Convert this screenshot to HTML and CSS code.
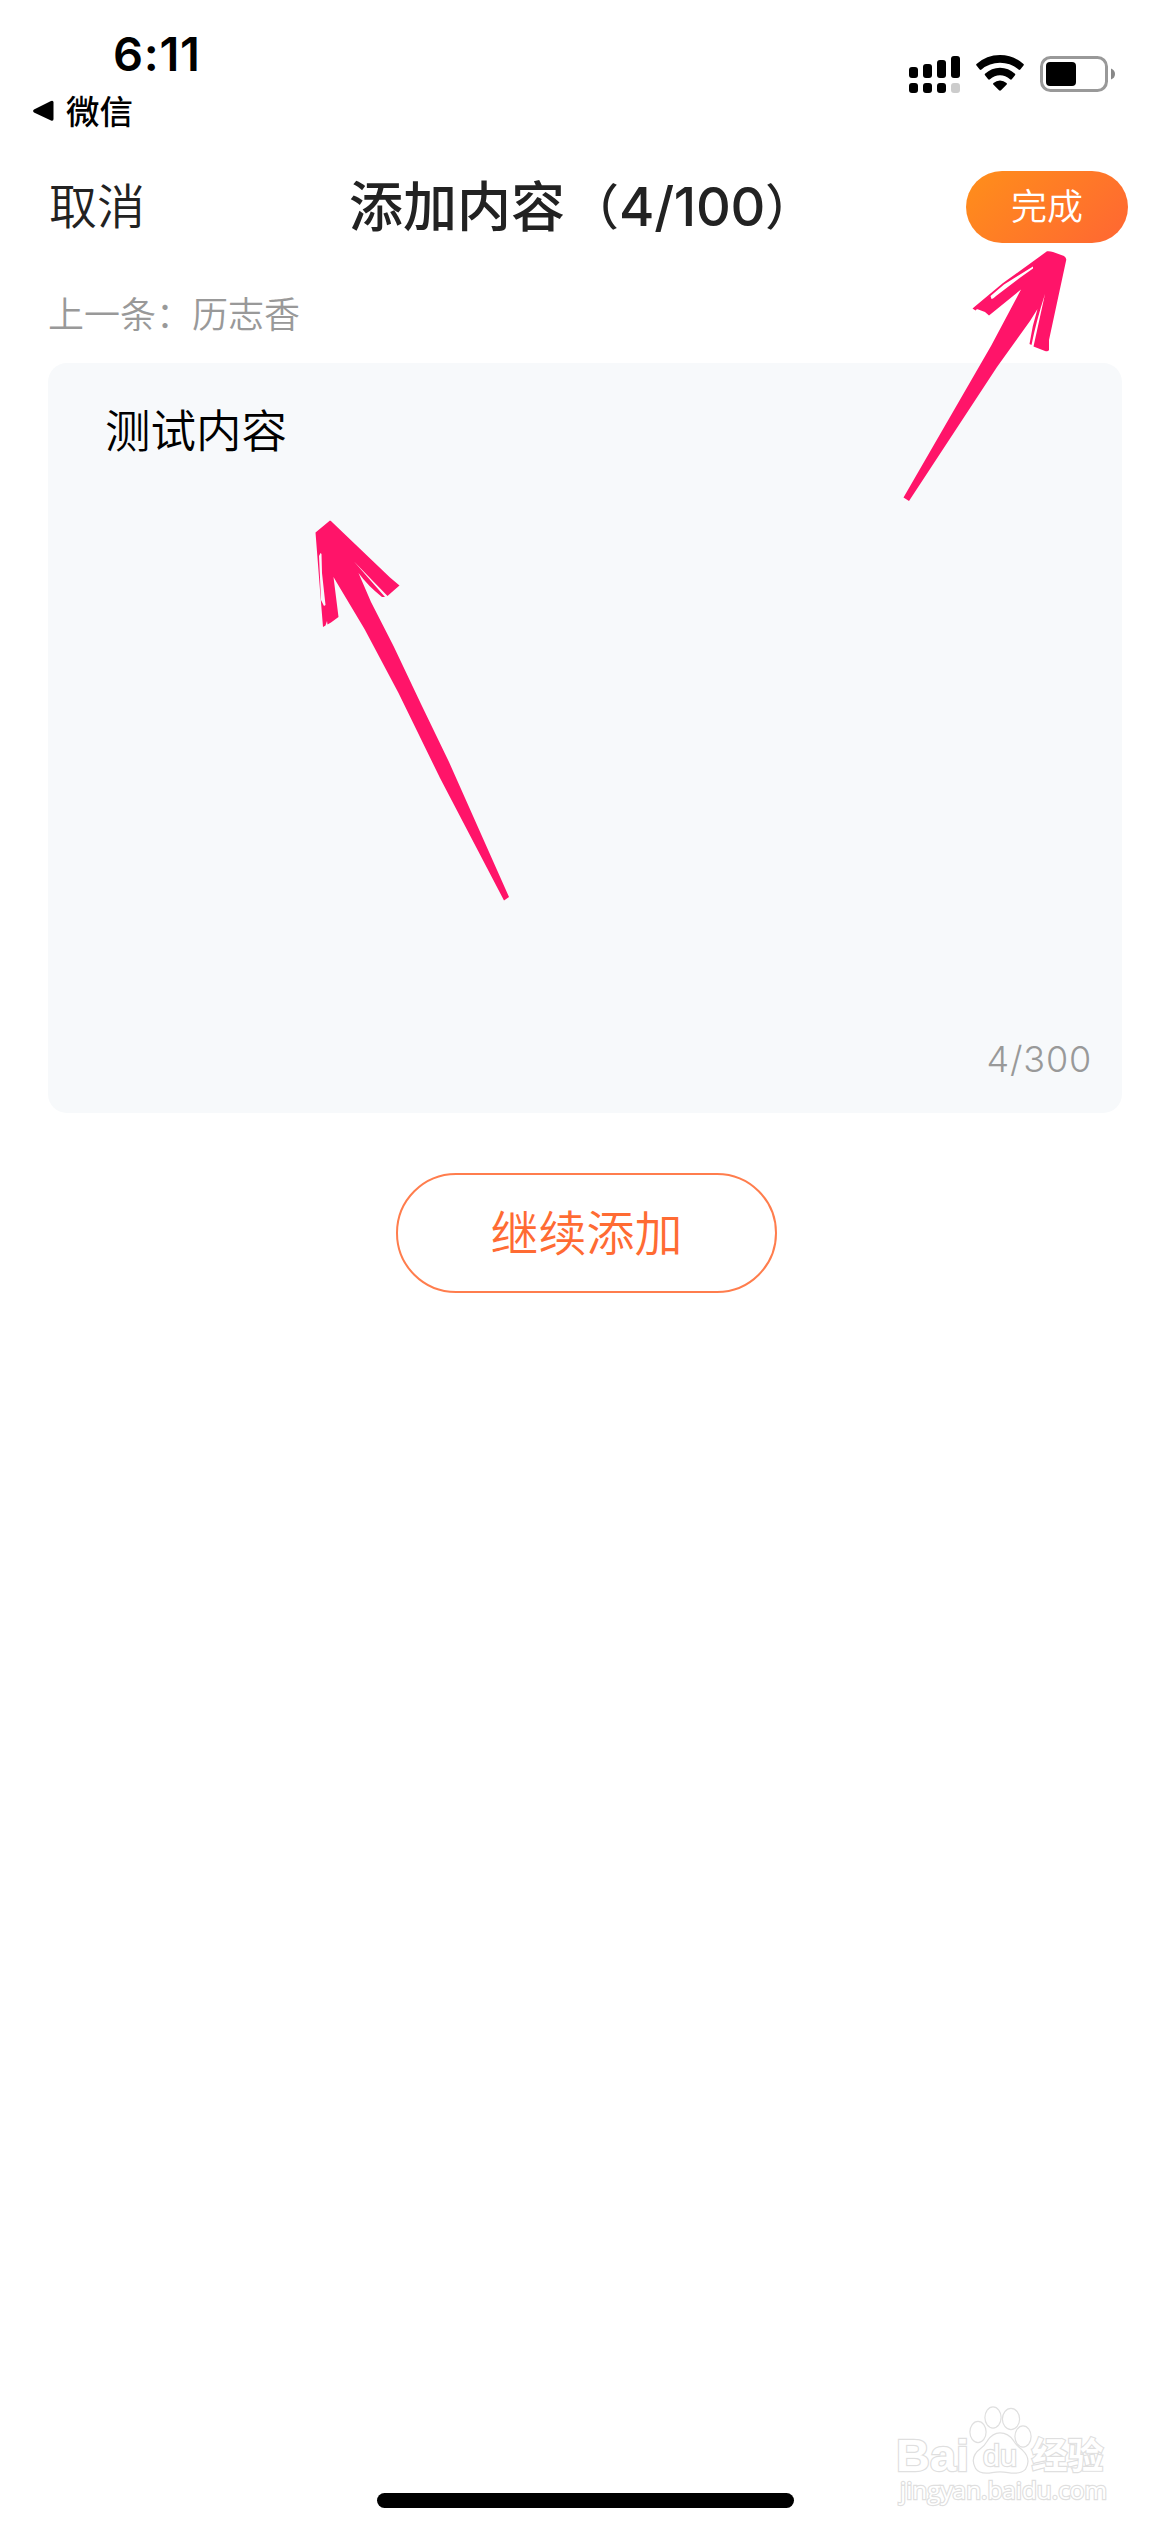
FILE: index.html
```html
<!DOCTYPE html>
<html lang="zh-CN">
<head>
<meta charset="utf-8">
<title>添加内容</title>
<link rel="stylesheet" href="styles.css">
</head>
<body>
<div class="screen">
  <header class="status">
    <div class="status-left">
      <div class="time">6:11</div>
      <div class="back-app">
        <svg width="21" height="22" viewBox="0 0 21 22"><path d="M1 9.4 18 .9Q20.5 0 20.5 2.5V19Q20.500 21.500 18 20.500L1 12.600Q-.8 11 1 9.400Z"/></svg>
        <span>微信</span>
      </div>
    </div>
    <div class="status-icons">
      <svg class="signal" width="51" height="37" viewBox="0 0 51 37">
        <rect x="0" y="11" width="9" height="11" rx="3"/><rect x="14" y="8" width="9" height="14" rx="3"/><rect x="28" y="4" width="9" height="18" rx="3"/><rect x="42" y="0" width="9" height="22" rx="3"/>
        <rect x="0" y="27" width="9" height="10" rx="3"/><rect x="14" y="27" width="9" height="10" rx="3"/><rect x="28" y="27" width="9" height="10" rx="3"/><rect x="42" y="27" width="9" height="10" rx="3" fill="#ccc"/>
      </svg>
      <svg class="wifi" width="48" height="36" viewBox="0 0 48 36">
        <path d="M.5 10.500Q-.3 9.800.5 9Q10.500 0 24 0T47.500 9Q48.300 9.800 47.500 10.500L44.300 14.500Q43.500 15.300 42.500 14.500Q34.500 7.800 24 7.800T5.500 14.500Q4.500 15.300 3.700 14.500Z"/>
        <path d="M9 20.300Q8.300 19.500 9 18.800Q15.500 12.800 24 12.800T39 18.800Q39.700 19.500 39 20.300L35.800 24.300Q35 25 34 24.300Q29.500 20.300 24 20.300T14 24.300Q13 25 12.200 24.300Z"/>
        <path d="M17.300 29.500Q16.700 28.700 17.500 28Q20.300 25.500 24 25.500T30.500 28Q31.300 28.700 30.700 29.500L25 35.300Q24 36.200 23 35.300Z"/>
      </svg>
      <svg class="battery" width="76" height="36" viewBox="0 0 76 36">
        <rect x="1.500" y="1.500" width="65" height="33" rx="9" fill="none" stroke="#999" stroke-width="3"/>
        <rect x="6" y="6" width="30" height="24" rx="4"/>
        <path d="M71 12.500Q75 14 75 18T71 23.500Z" fill="#888"/>
      </svg>
    </div>
  </header>

  <nav class="nav">
    <div class="cancel">取消</div>
    <h1 class="title">添加内容<span class="paren open">（</span><span class="num">4/100</span><span class="paren">）</span></h1>
    <div class="done">完成</div>
  </nav>

  <p class="previous">上一条：历志香</p>

  <main class="editor">
    <div class="editor-text">测试内容</div>
    <div class="counter">4/300</div>
  </main>

  <div class="more">继续添加</div>
  <div class="home-bar"></div>

  <svg class="arrows" width="1170" height="940" viewBox="0 0 1170 940">
    <path fill="#ff1469" d="M1047 251.300Q1050 251 1053 252L1064 256Q1067 258 1066 261L1049 340L1049 350Q1048 352 1045 351L1033.500 346.500L1045 294Q1036 322 1031.500 345L1029.500 344Q1032 326 1037.500 309L1030 321L997 367L909 501L903.500 497.500L991 346L1021 289.500L989 315.500L985 312L977 309L979 307L975.500 310.500L972.500 308.500L1003 283Z"/>
    <path fill="#fff" d="M1033 266.500L1004 284.500L990.500 296L991.500 299Q993 299 996 296L1021 277L1033 268.500Z"/>
    <path fill="#ff1469" d="M330 520.500Q331.500 521 333 523L390 577.500L399.500 585.500L392 592L387.500 596L354 561.500L385 597L382 597Q368 586 358.500 573L371 602L393.500 646L421 704L449 762L509 897L504 900.500L440 778L398.500 693L364.500 629L337 583L333.500 577L338.500 617L331 622.500L327.500 624.500L327 621L325.500 625.500L323 627L320 590L315.500 532.500Z"/>
    <path fill="#f7f9fb" d="M320.500 553L319 556L321 600L324 606L325.500 605L322 573L321.500 554Z"/>
  </svg>

  <svg class="watermark" width="220" height="110" viewBox="0 0 220 110">
    <g fill="#fff" stroke="#dfdfdf" stroke-width="2.400">
      <text class="wm-latin" x="0" y="70.500" textLength="73" lengthAdjust="spacingAndGlyphs">Bai</text>
      <ellipse cx="82" cy="32" rx="7.500" ry="10"/>
      <ellipse cx="97" cy="17.500" rx="7.500" ry="10"/>
      <ellipse cx="115" cy="19" rx="8" ry="10"/>
      <ellipse cx="127" cy="36.500" rx="7.500" ry="10"/>
      <path d="M104 33.500Q112 33.500 117 41Q120 46 126 50.500Q135 59 129 69Q124 74 112 72Q104 70.500 96 72Q84 74 80 68Q74 57 85 49Q89 46 92 41Q97 33.500 104 33.500Z"/>
      <text class="wm-du" x="87" y="66" textLength="34" lengthAdjust="spacingAndGlyphs">du</text>
      <text class="wm-cjk" x="135.500" y="69">经验</text>
      <text class="wm-url" x="4" y="99" textLength="207" lengthAdjust="spacingAndGlyphs">jingyan.baidu.com</text>
    </g>
  </svg>
</div>
</body>
</html>
```
FILE: styles.css
```css
* { box-sizing: border-box; }
body {
  margin: 0;
  background: #fff;
  color: #222;
  font-family: Inter, "Noto Sans CJK SC", sans-serif;
}
.screen {
  position: relative;
  width: 1170px;
  height: 2532px;
  display: flex;
  flex-direction: column;
  overflow: hidden;
}
svg { display: block; }
.status {
  height: 141px;
  flex: none;
  display: flex;
  justify-content: space-between;
  padding: 24px 54px 0 33px;
  color: #000;
}
.time {
  height: 60px;
  line-height: 60px;
  padding-left: 80px;
  font-size: 47px;
  font-weight: 600;
  letter-spacing: 0.7px;
}
.back-app {
  display: flex;
  align-items: center;
  gap: 12px;
  height: 54px;
  font-size: 33.5px;
  font-weight: 500;
  line-height: 54px;
}
.back-app span { padding-top: 2px; }
.status-icons {
  display: flex;
  align-items: flex-start;
  gap: 16px;
  padding-top: 32px;
}
.wifi { margin-top: -1px; }
.nav {
  height: 132px;
  flex: none;
  display: grid;
  grid-template-columns: 300px 1fr 162px;
  align-items: center;
  padding: 0 42px 0 49px;
}
.cancel { font-size: 48px; line-height: 72px; font-weight: 350; }
.title {
  margin: 0;
  display: flex;
  align-items: center;
  height: 72px;
  padding-top: 2px;
  font-size: 54px;
  line-height: 72px;
  font-weight: 500;
  white-space: nowrap;
}
.num { margin-top: -2px; letter-spacing: -0.3px; }
.paren { width: 54px; font-size: 49px; }
.open { text-align: right; }
.done {
  height: 72px;
  border-radius: 36px;
  background: linear-gradient(135deg, #ff8f1a, #ff6633);
  color: #fff;
  font-size: 36px;
  font-weight: 350;
  line-height: 72px;
  text-align: center;
}
.previous {
  margin: 0;
  height: 90px;
  flex: none;
  padding-left: 48px;
  font-size: 36px;
  font-weight: 350;
  line-height: 85px;
  color: #999;
}
.editor {
  height: 750px;
  flex: none;
  margin: 0 48px;
  padding: 34px 30px 24px 57px;
  display: flex;
  flex-direction: column;
  justify-content: space-between;
  background: #f7f9fb;
  border-radius: 19px;
}
.editor-text { font-size: 45.5px; line-height: 70px; font-weight: 350; color: #000; }
.counter {
  text-align: right;
  font-size: 36px;
  font-weight: 300;
  line-height: 60px;
  letter-spacing: 0.8px;
  color: #999;
}
.more {
  width: 381px;
  height: 120px;
  flex: none;
  margin: 60px 0 0 396px;
  border: 2px solid #ff7d4d;
  border-radius: 60px;
  color: #ff6b33;
  font-size: 48px;
  font-weight: 350;
  line-height: 118px;
  text-align: center;
}
.home-bar {
  width: 417px;
  height: 15px;
  flex: none;
  margin: auto 0 24px 377px;
  border-radius: 8px;
  background: #000;
}
.arrows { position: absolute; left: 0; top: 0; }
.watermark { position: absolute; left: 896px; top: 2400px; paint-order: stroke; }
.wm-latin { font: 700 45px "Liberation Sans", sans-serif; }
.wm-du { font: 400 29px "Liberation Sans", sans-serif; }
.wm-cjk { font: 700 36px "Noto Sans CJK SC", sans-serif; }
.wm-url { font: 400 24px "Open Sans", sans-serif; }
```
